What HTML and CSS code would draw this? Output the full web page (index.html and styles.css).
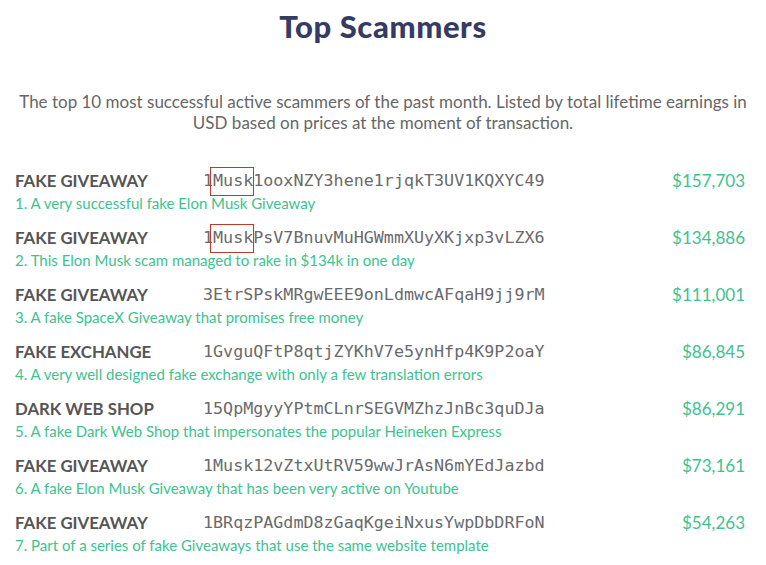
FILE: index.html
```html
<!DOCTYPE html>
<html lang="en">
<head>
    <meta charset="UTF-8">
    <meta name="viewport" content="width=device-width, initial-scale=1.0">
    <title>Top Scammers</title>
    <link rel="stylesheet" href="styles.css">
</head>
<body>

    <!-- Page heading -->
    <div class="intro">
        <h1>Top Scammers</h1>
        <p>The top 10 most successful active scammers of the past month. Listed by total lifetime earnings in USD based on prices at the moment of transaction.</p>
    </div>

    <!-- Scammer list -->
    <ul class="scam-list">
        <li>
            <div class="scam-row">
                <span class="scam-type">FAKE GIVEAWAY</span>
                <span class="scam-address">1<span class="mark">Musk</span>1ooxNZY3hene1rjqkT3UV1KQXYC49</span>
                <span class="scam-amount">$157,703</span>
            </div>
            <div class="scam-desc">1. A very successful fake Elon Musk Giveaway</div>
        </li>
        <li>
            <div class="scam-row">
                <span class="scam-type">FAKE GIVEAWAY</span>
                <span class="scam-address">1<span class="mark">Musk</span>PsV7BnuvMuHGWmmXUyXKjxp3vLZX6</span>
                <span class="scam-amount">$134,886</span>
            </div>
            <div class="scam-desc">2. This Elon Musk scam managed to rake in $134k in one day</div>
        </li>
        <li>
            <div class="scam-row">
                <span class="scam-type">FAKE GIVEAWAY</span>
                <span class="scam-address">3EtrSPskMRgwEEE9onLdmwcAFqaH9jj9rM</span>
                <span class="scam-amount">$111,001</span>
            </div>
            <div class="scam-desc">3. A fake SpaceX Giveaway that promises free money</div>
        </li>
        <li>
            <div class="scam-row">
                <span class="scam-type">FAKE EXCHANGE</span>
                <span class="scam-address">1GvguQFtP8qtjZYKhV7e5ynHfp4K9P2oaY</span>
                <span class="scam-amount">$86,845</span>
            </div>
            <div class="scam-desc">4. A very well designed fake exchange with only a few translation errors</div>
        </li>
        <li>
            <div class="scam-row">
                <span class="scam-type">DARK WEB SHOP</span>
                <span class="scam-address">15QpMgyyYPtmCLnrSEGVMZhzJnBc3quDJa</span>
                <span class="scam-amount">$86,291</span>
            </div>
            <div class="scam-desc">5. A fake Dark Web Shop that impersonates the popular Heineken Express</div>
        </li>
        <li>
            <div class="scam-row">
                <span class="scam-type">FAKE GIVEAWAY</span>
                <span class="scam-address">1Musk12vZtxUtRV59wwJrAsN6mYEdJazbd</span>
                <span class="scam-amount">$73,161</span>
            </div>
            <div class="scam-desc">6. A fake Elon Musk Giveaway that has been very active on Youtube</div>
        </li>
        <li>
            <div class="scam-row">
                <span class="scam-type">FAKE GIVEAWAY</span>
                <span class="scam-address">1BRqzPAGdmD8zGaqKgeiNxusYwpDbDRFoN</span>
                <span class="scam-amount">$54,263</span>
            </div>
            <div class="scam-desc">7. Part of a series of fake Giveaways that use the same website template</div>
        </li>
    </ul>

</body>
</html>
```

FILE: styles.css
```css
/* General body styles */
body {
    font-family: Lato, "Open Sans", sans-serif;
    background-color: #fff;
    color: #555;
    margin: 0;
}

/* Heading block */
.intro {
    text-align: center;
    padding: 0 18px;
}

.intro h1 {
    font-size: 31px;
    font-weight: 900;
    letter-spacing: 0.6px;
    color: #363b63;
    margin: 5px 0 0;
    line-height: 42px;
}

.intro p {
    font-size: 17px;
    line-height: 21px;
    color: #666;
    margin: 44px 0 0;
}

/* Scammer list */
.scam-list {
    list-style: none;
    margin: 34px 0 0;
    padding: 0 21px 0 15px;
}

.scam-list li {
    height: 57px;
}

.scam-row {
    display: flex;
    align-items: center;
    height: 26px;
}

.scam-type {
    width: 188px;
    font-size: 16.8px;
    font-weight: bold;
    color: #555;
}

.scam-address {
    flex: 1;
    font-family: "DejaVu Sans Mono", monospace;
    font-size: 16.7px;
    color: #6a6a6a;
}

/* Red box round the vanity part of an address */
.mark {
    position: relative;
}

.mark::after {
    content: "";
    position: absolute;
    left: -3px;
    right: -1px;
    top: -3px;
    bottom: -6px;
    border: 1px solid #c0392b;
}

.scam-amount {
    font-size: 17px;
    color: #3ec28f;
}

.scam-desc {
    font-size: 15px;
    color: #3ec28f;
    line-height: 20px;
}
```
